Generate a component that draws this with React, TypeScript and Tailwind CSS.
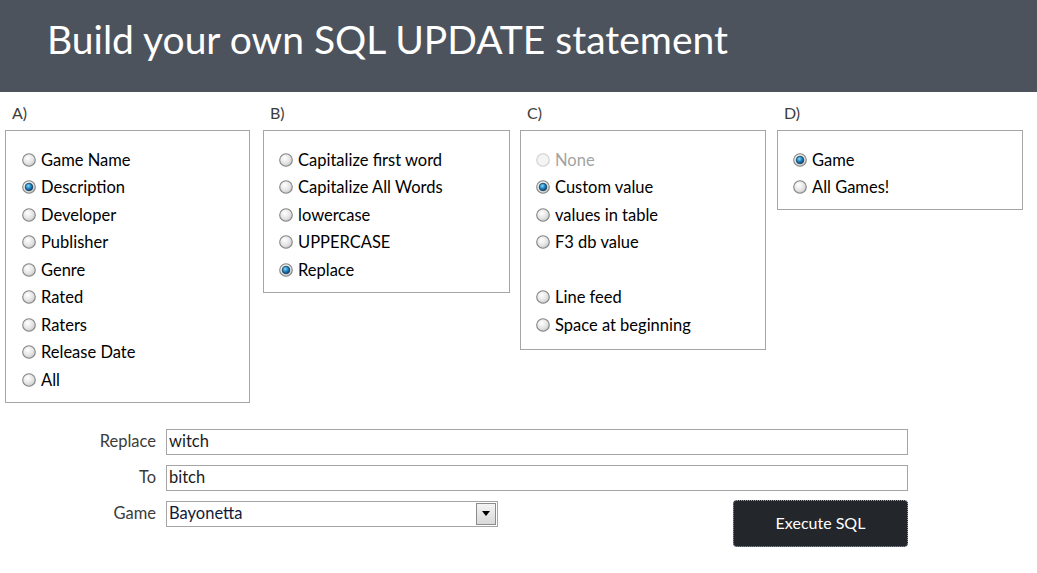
import React from "react";

const FONT = { fontFamily: "Lato, 'Open Sans', sans-serif" };

function Radio({ checked, disabled }: { checked?: boolean; disabled?: boolean }) {
  return (
    <svg width="14" height="14" viewBox="0 0 14 14" className="shrink-0">
      <defs>
        <radialGradient id="rg-off" cx="0.4" cy="0.35" r="0.7">
          <stop offset="0" stopColor="#ffffff" />
          <stop offset="0.6" stopColor="#e4e4e4" />
          <stop offset="1" stopColor="#c4c4c4" />
        </radialGradient>
        <radialGradient id="rg-dot" cx="0.4" cy="0.35" r="0.7">
          <stop offset="0" stopColor="#8adaf8" />
          <stop offset="0.5" stopColor="#1e86c4" />
          <stop offset="1" stopColor="#0b3a66" />
        </radialGradient>
      </defs>
      <circle cx="7" cy="7" r="6.3" fill={disabled ? "#f4f4f4" : "url(#rg-off)"} stroke={disabled ? "#cfcfcf" : "#848585"} strokeWidth="1.1" />
      {checked && <circle cx="7" cy="7" r="3.8" fill="url(#rg-dot)" stroke="#173a58" strokeWidth="0.8" />}
    </svg>
  );
}

function Opt({ label, checked, disabled }: { label: string; checked?: boolean; disabled?: boolean }) {
  return (
    <div className="flex h-[27.5px] items-center gap-[5px]">
      <Radio checked={checked} disabled={disabled} />
      <span className={`text-[16.5px] leading-none ${disabled ? "text-[#a3a3a3]" : "text-black"}`}>{label}</span>
    </div>
  );
}

function Group({
  label,
  width,
  ml,
  boxPl,
  pb,
  children,
}: {
  label: string;
  width: string;
  ml: string;
  boxPl: string;
  pb: string;
  children: React.ReactNode;
}) {
  return (
    <div className={`flex flex-col ${width} ${ml}`}>
      <div className="h-[20px] pl-[7px] text-[16px] leading-[20px] text-[#3c3c3c]">{label}</div>
      <div className={`mt-[7px] border border-[#a5a5a5] pt-[15px] ${boxPl} ${pb}`}>{children}</div>
    </div>
  );
}

export default function App() {
  return (
    <div className="h-[573px] w-[1037px] overflow-hidden bg-white" style={FONT}>
      <div className="flex h-[92px] items-center bg-[#4d535d] pl-[47px]">
        <h1 className="pb-[14px] text-[39px] font-normal leading-none text-white">Build your own SQL UPDATE statement</h1>
      </div>

      <div className="flex items-start pt-[11px]">
        <Group label="A)" width="w-[245px]" ml="ml-[5px]" boxPl="pl-[16px]" pb="pb-[8px]">
          <Opt label="Game Name" />
          <Opt label="Description" checked />
          <Opt label="Developer" />
          <Opt label="Publisher" />
          <Opt label="Genre" />
          <Opt label="Rated" />
          <Opt label="Raters" />
          <Opt label="Release Date" />
          <Opt label="All" />
        </Group>
        <Group label="B)" width="w-[247px]" ml="ml-[13px]" boxPl="pl-[15px]" pb="pb-[8px]">
          <Opt label="Capitalize first word" />
          <Opt label="Capitalize All Words" />
          <Opt label="lowercase" />
          <Opt label="UPPERCASE" />
          <Opt label="Replace" checked />
        </Group>
        <Group label="C)" width="w-[246px]" ml="ml-[10px]" boxPl="pl-[15px]" pb="pb-[10px]">
          <Opt label="None" disabled />
          <Opt label="Custom value" checked />
          <Opt label="values in table" />
          <Opt label="F3 db value" />
          <div className="h-[27.5px]" />
          <Opt label="Line feed" />
          <Opt label="Space at beginning" />
        </Group>
        <Group label="D)" width="w-[246px]" ml="ml-[11px]" boxPl="pl-[15px]" pb="pb-[8px]">
          <Opt label="Game" checked />
          <Opt label="All Games!" />
        </Group>
      </div>

      <div className="mt-[26px] flex flex-col gap-[10px]">
        <div className="flex items-center">
          <div className="w-[156px] text-right text-[16.5px] text-[#3c3c3c]">Replace</div>
          <div className="ml-[10px] flex h-[26px] w-[742px] items-center border border-[#a5a5a5] pl-[2px] text-[16.5px] text-[#1a1a1a]">witch</div>
        </div>
        <div className="flex items-center">
          <div className="w-[156px] text-right text-[16.5px] text-[#3c3c3c]">To</div>
          <div className="ml-[10px] flex h-[26px] w-[742px] items-center border border-[#a5a5a5] pl-[2px] text-[16.5px] text-[#1a1a1a]">bitch</div>
        </div>
        <div className="flex items-start">
          <div className="flex h-[26px] w-[156px] items-center justify-end text-[16.5px] text-[#3c3c3c]">Game</div>
          <div className="ml-[10px] flex h-[26px] w-[332px] items-center border border-[#a5a5a5] pl-[2px] text-[16.5px] text-[#0f1a3a]">
            <span className="flex-1">Bayonetta</span>
            <div className="mr-[1px] flex h-[22px] w-[20px] items-center justify-center border border-[#8c8c8c] bg-gradient-to-b from-[#f4f4f4] to-[#d9d9d9]">
              <svg width="8" height="5" viewBox="0 0 8 5">
                <path d="M0 0 L8 0 L4 5 Z" fill="#000" />
              </svg>
            </div>
          </div>
          <button className="-mt-[1px] ml-[235px] flex h-[47px] w-[175px] items-center justify-center rounded-[4px] border border-dotted border-[#8ea6c6] bg-[#23262b] text-[16px] text-white">
            Execute SQL
          </button>
        </div>
      </div>
    </div>
  );
}
